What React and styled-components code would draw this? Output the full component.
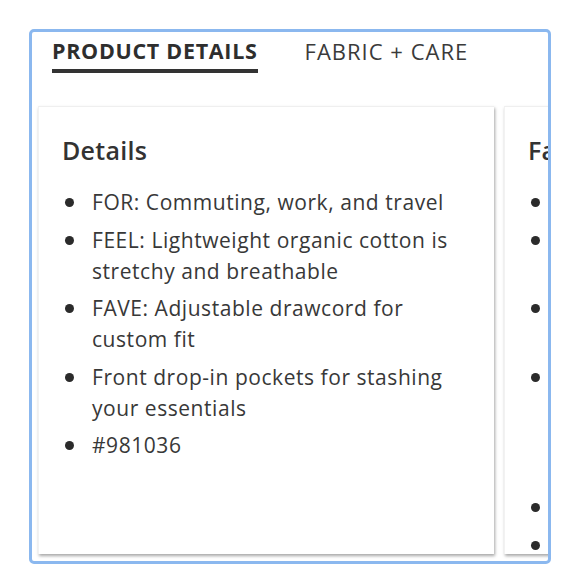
import React from "react";
import styled, { createGlobalStyle } from "styled-components";

const Global = createGlobalStyle`
  html, body { margin: 0; padding: 0; background: #ffffff; }
  body { font-family: "Open Sans", Lato, sans-serif; color: #333333; }
`;

const Frame = styled.div`
  box-sizing: border-box;
  margin: 29px 0 0 29px;
  width: 522px;
  height: 535px;
  border: 3px solid #8bb8ef;
  border-radius: 5px;
  overflow: hidden;
  display: flex;
  flex-direction: column;
`;

const TabBar = styled.div`
  display: flex;
  gap: 47px;
  padding: 5px 0 0 20px;
  height: 68px;
  box-sizing: border-box;
  flex-shrink: 0;
`;

const Tab = styled.div`
  font-size: ${(p) => (p.$active ? "21.5px" : "22px")};
  letter-spacing: ${(p) => (p.$active ? "0.7px" : "1px")};
  line-height: 28px;
  font-weight: ${(p) => (p.$active ? 700 : 400)};
  color: ${(p) => (p.$active ? "#2e2e2e" : "#3a3a3a")};
  padding-bottom: 4px;
  height: 36px;
  box-sizing: border-box;
  border-bottom: ${(p) => (p.$active ? "4px solid #333333" : "4px solid transparent")};
  white-space: nowrap;
`;

const Cards = styled.div`
  display: flex;
  gap: 10px;
  padding: 6px 0 0 6px;
  flex-shrink: 0;
`;

const Card = styled.section`
  flex: 0 0 456px;
  height: 448px;
  box-sizing: border-box;
  padding: 28px 24px 0 23px;
  background: #ffffff;
  border-top: 1px solid #efefef;
  border-left: 1px solid #f2f2f2;
  box-shadow: 1px 2px 3px rgba(0, 0, 0, 0.35);
`;

const Heading = styled.h3`
  margin: 0 0 22px 0;
  font-size: 25px;
  letter-spacing: 0.3px;
  line-height: 30px;
  font-weight: 600;
  color: #333333;
`;

const List = styled.ul`
  list-style: none;
  margin: 0;
  padding: 0;
  display: flex;
  flex-direction: column;
  gap: 6.5px;
`;

const Item = styled.li`
  position: relative;
  padding-left: 30px;
  font-size: 21px;
  letter-spacing: 0.55px;
  line-height: 31px;
  color: #383838;
  &::before {
    content: "";
    position: absolute;
    left: 3px;
    top: 11px;
    width: 9px;
    height: 9px;
    border-radius: 50%;
    background: #2b2b2b;
  }
`;

const details = [
  "FOR: Commuting, work, and travel",
  "FEEL: Lightweight organic cotton is stretchy and breathable",
  "FAVE: Adjustable drawcord for custom fit",
  "Front drop-in pockets for stashing your essentials",
  "#981036",
];

const fabric = [
  "98% organic cotton, 2% spandex",
  "Lightweight twill with a soft, brushed finish",
  "Machine wash cold with like colors, tumble dry",
  "Do not bleach. Warm iron if needed. Do not dry clean. Wash inside out to help preserve color over time and keep it soft",
  "Imported",
  "Fair Trade",
];

export default function App() {
  return (
    <>
      <Global />
      <Frame>
        <TabBar>
          <Tab $active>PRODUCT DETAILS</Tab>
          <Tab>FABRIC + CARE</Tab>
        </TabBar>
        <Cards>
          <Card>
            <Heading>Details</Heading>
            <List>
              {details.map((d) => (
                <Item key={d}>{d}</Item>
              ))}
            </List>
          </Card>
          <Card>
            <Heading>Fabric + Care</Heading>
            <List>
              {fabric.map((d) => (
                <Item key={d}>{d}</Item>
              ))}
            </List>
          </Card>
        </Cards>
      </Frame>
    </>
  );
}
